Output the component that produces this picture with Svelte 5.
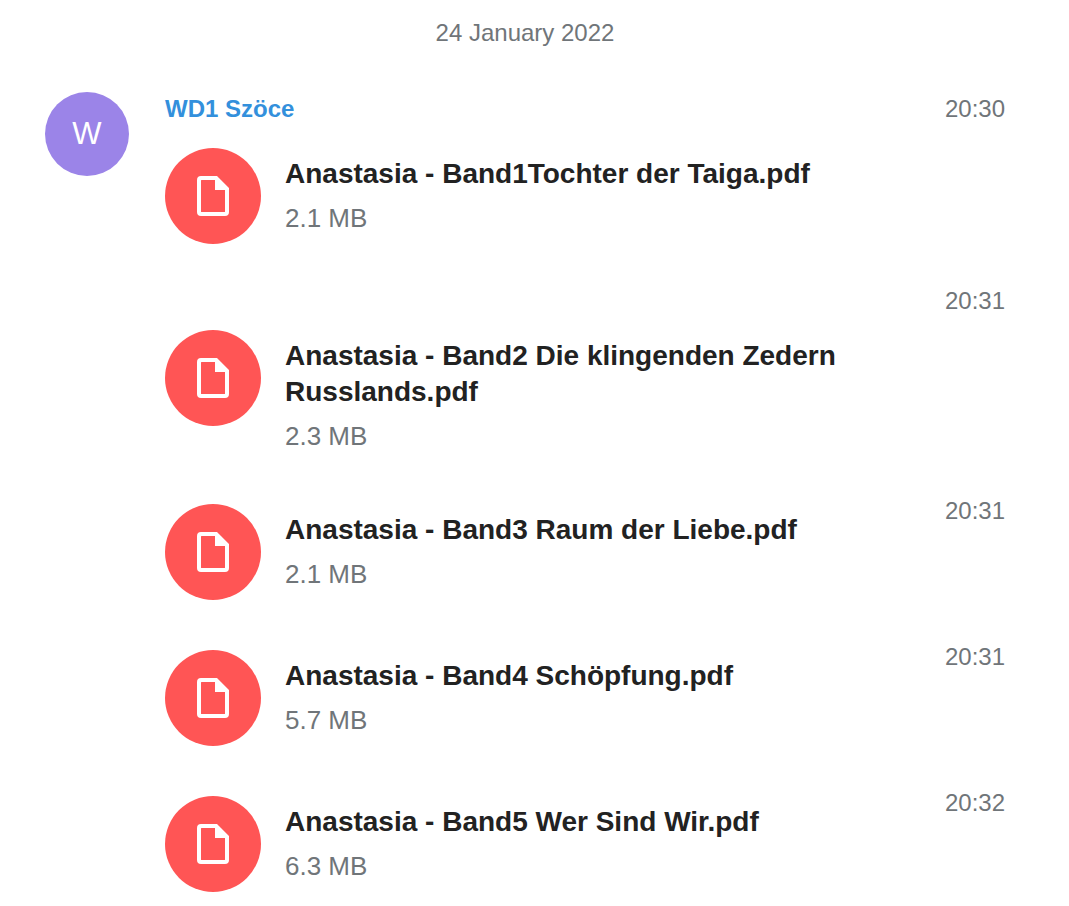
<script lang="ts">
	const files = [
		{ name: 'Anastasia - Band1Tochter der Taiga.pdf', size: '2.1 MB', time: '20:30', sender: 'WD1 Szöce', avatar: 'W' },
		{ name: 'Anastasia - Band2 Die klingenden Zedern Russlands.pdf', size: '2.3 MB', time: '20:31', spaced: true },
		{ name: 'Anastasia - Band3 Raum der Liebe.pdf', size: '2.1 MB', time: '20:31' },
		{ name: 'Anastasia - Band4 Schöpfung.pdf', size: '5.7 MB', time: '20:31' },
		{ name: 'Anastasia - Band5 Wer Sind Wir.pdf', size: '6.3 MB', time: '20:32' }
	];
</script>

<div class="chat">
	<div class="date">24 January 2022</div>

	{#each files as file}
		<div class="msg">
			<div class="avatar-col">
				{#if file.avatar}
					<div class="avatar">{file.avatar}</div>
				{/if}
			</div>
			<div class="body" class:spaced={file.spaced} class:first={file.sender}>
				{#if file.sender}
					<div class="sender">{file.sender}</div>
				{/if}
				<div class="file">
					<div class="file-icon">
						<svg width="32" height="40" viewBox="0 0 32 40">
							<path
								fill="#fff"
								fill-rule="evenodd"
								d="M4 0H20L32 12V36A4 4 0 0 1 28 40H4A4 4 0 0 1 0 36V4A4 4 0 0 1 4 0ZM4.5 4A.5 .5 0 0 0 4 4.5V35.5A.5 .5 0 0 0 4.5 36H27.5A.5 .5 0 0 0 28 35.5V14H18V4Z"
							/>
						</svg>
					</div>
					<div class="file-text">
						<div class="file-name">{file.name}</div>
						<div class="file-size">{file.size}</div>
					</div>
				</div>
			</div>
			<div class="time">{file.time}</div>
		</div>
	{/each}
</div>

<style>
	:global(body) {
		background: #fff;
		font-family: 'Liberation Sans', Arial, sans-serif;
	}

	.chat {
		width: 1069px;
		height: 906px;
		overflow: hidden;
		box-sizing: border-box;
		padding: 15px 64px 0 45px;
	}

	.date {
		text-align: center;
		font-size: 24px;
		line-height: 36px;
		color: #707579;
		margin-bottom: 41px;
	}

	.msg {
		display: flex;
		padding-bottom: 40px;
	}

	.avatar-col {
		width: 120px;
		flex-shrink: 0;
	}

	.avatar {
		width: 84px;
		height: 84px;
		border-radius: 50%;
		background: #9b84e8;
		color: #fff;
		font-size: 31px;
		display: flex;
		align-items: center;
		justify-content: center;
	}

	.body {
		flex: 1;
		padding-top: 10px;
		min-width: 0;
	}

	.body.first {
		padding-top: 0;
	}

	.body.spaced {
		padding-top: 46px;
	}

	.sender {
		font-size: 24px;
		font-weight: 700;
		line-height: 34px;
		color: #3390dc;
		margin-bottom: 22px;
	}

	.file {
		display: flex;
		gap: 24px;
	}

	.file-icon {
		width: 96px;
		height: 96px;
		flex-shrink: 0;
		border-radius: 50%;
		background: #ff5555;
		display: flex;
		align-items: center;
		justify-content: center;
	}

	.file-text {
		padding-top: 8px;
		max-width: 600px;
	}

	.file-name {
		font-size: 28px;
		font-weight: 700;
		line-height: 36px;
		color: #222;
	}

	.file-size {
		font-size: 26px;
		line-height: 36px;
		margin-top: 8px;
		color: #707579;
	}

	.time {
		font-size: 24px;
		line-height: 34px;
		color: #707579;
		flex-shrink: 0;
	}
</style>
